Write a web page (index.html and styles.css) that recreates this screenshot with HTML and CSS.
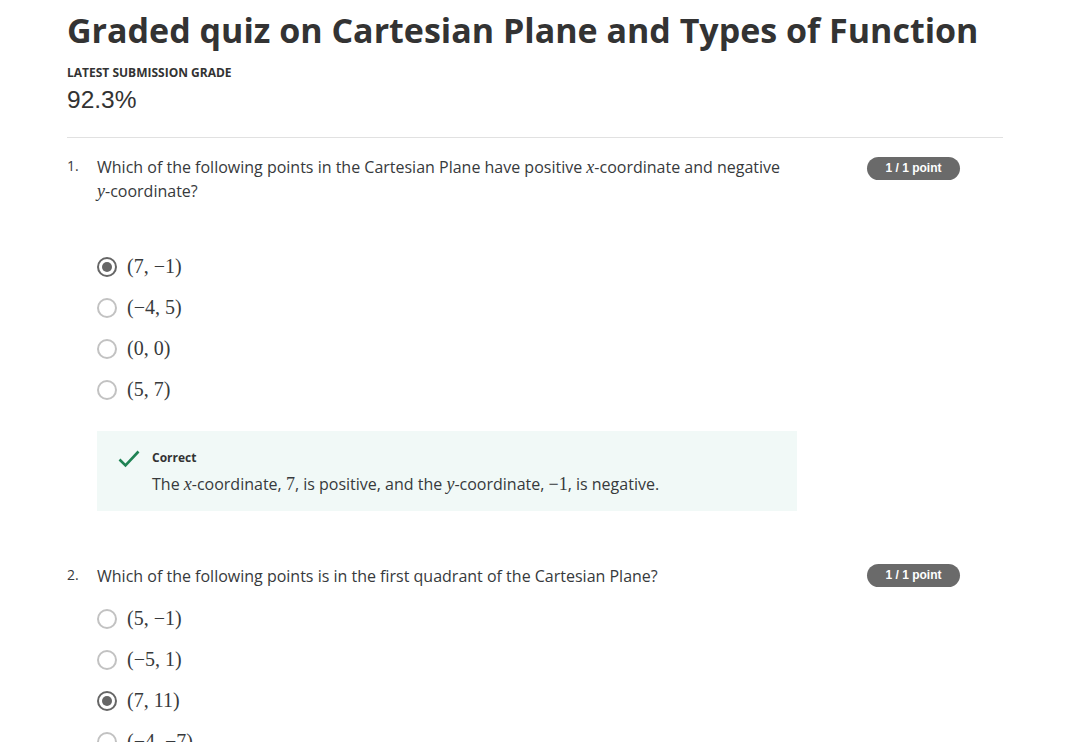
FILE: index.html
```html
<!DOCTYPE html>
<html>
<head>
<meta charset="utf-8">
<link rel="stylesheet" href="styles.css">
</head>
<body>
<main class="page">
  <header class="header">
    <h1 class="title">Graded quiz on Cartesian Plane and Types of Function</h1>
    <div class="grade-label">LATEST SUBMISSION GRADE</div>
    <div class="grade">92.3%</div>
  </header>

  <section class="question q1">
    <div class="q-head">
      <span class="q-num">1.</span>
      <p class="q-text">Which of the following points in the Cartesian Plane have positive <span class="mi">x</span>-coordinate and negative <span class="mi">y</span>-coordinate?</p>
      <span class="badge">1 / 1 point</span>
    </div>
    <ul class="options first-opts">
      <li class="opt"><span class="radio checked"></span><span class="math">(7, −1)</span></li>
      <li class="opt"><span class="radio"></span><span class="math">(−4, 5)</span></li>
      <li class="opt"><span class="radio"></span><span class="math">(0, 0)</span></li>
      <li class="opt"><span class="radio"></span><span class="math">(5, 7)</span></li>
    </ul>
    <div class="feedback">
      <svg class="check" width="22" height="18" viewBox="0 0 22 18"><path d="M1.5 9.5 L7.5 15.5 L20.5 1.5" fill="none" stroke="#1f8354" stroke-width="2.6"/></svg>
      <div class="fb-body">
        <div class="fb-title">Correct</div>
        <div class="fb-text">The <span class="mi">x</span>-coordinate, <span class="mn">7</span>, is positive, and the <span class="mi">y</span>-coordinate, <span class="mn">−1</span>, is negative.</div>
      </div>
    </div>
  </section>

  <section class="question q2">
    <div class="q-head">
      <span class="q-num">2.</span>
      <p class="q-text">Which of the following points is in the first quadrant of the Cartesian Plane?</p>
      <span class="badge">1 / 1 point</span>
    </div>
    <ul class="options">
      <li class="opt"><span class="radio"></span><span class="math">(5, −1)</span></li>
      <li class="opt"><span class="radio"></span><span class="math">(−5, 1)</span></li>
      <li class="opt"><span class="radio checked"></span><span class="math">(7, 11)</span></li>
      <li class="opt"><span class="radio"></span><span class="math">(−4, −7)</span></li>
    </ul>
  </section>
</main>
</body>
</html>
```

FILE: styles.css
```css
html, body {
  margin: 0;
  padding: 0;
  background: #fff;
  overflow: hidden;
}
body {
  font-family: "Open Sans", "Liberation Sans", sans-serif;
  color: #373a3c;
}
.page {
  width: 936px;
  margin-left: 67px;
}
.header {
  border-bottom: 1px solid #e1e1e1;
  padding-bottom: 22px;
}
.title {
  margin: 0;
  padding-top: 8px;
  font-size: 34px;
  line-height: 44px;
  font-weight: 700;
  color: #333;
  white-space: nowrap;
}
.grade-label {
  margin-top: 13px;
  font-size: 12px;
  line-height: 16px;
  font-weight: 700;
  color: #333;
}
.grade {
  margin-top: 4px;
  font-family: "Liberation Sans", Arial, sans-serif;
  font-size: 24.5px;
  line-height: 30px;
  color: #333;
}
.question {
  padding-top: 17px;
}
.q2 {
  padding-top: 53px;
}
.q-head {
  display: flex;
  align-items: flex-start;
}
.q-num {
  width: 30px;
  font-size: 14px;
  line-height: 22px;
  flex: none;
}
.q-text {
  margin: 0;
  width: 700px;
  font-size: 16px;
  line-height: 24px;
  color: #373a3c;
}
.badge {
  margin-left: 70px;
  margin-top: 2px;
  width: 93px;
  height: 23px;
  border-radius: 12px;
  background: #6a6a6a;
  color: #fff;
  font-family: "Liberation Sans", Arial, sans-serif;
  font-weight: 700;
  font-size: 12px;
  line-height: 23px;
  text-align: center;
  flex: none;
}
.q2 .badge {
  margin-top: 0;
}
.mi {
  font-family: "Liberation Serif", "DejaVu Serif", serif;
  font-style: italic;
  font-size: 18px;
}
.mn {
  font-family: "Liberation Serif", "DejaVu Serif", serif;
  font-size: 18px;
}
.options {
  list-style: none;
  margin: 0;
  padding: 0 0 0 30px;
}
.first-opts {
  margin-top: 43px;
}
.q2 .options {
  margin-top: 10px;
}
.opt {
  display: flex;
  align-items: center;
  height: 41px;
}
.radio {
  box-sizing: border-box;
  width: 20px;
  height: 20px;
  border-radius: 50%;
  border: 2px solid #c2c2c2;
  margin-right: 10px;
  flex: none;
  display: flex;
  align-items: center;
  justify-content: center;
}
.radio.checked {
  border: 2px solid #666;
}
.radio.checked::after {
  content: "";
  width: 10px;
  height: 10px;
  border-radius: 50%;
  background: #666;
}
.math {
  font-family: "Liberation Serif", "DejaVu Serif", serif;
  font-size: 20px;
  color: #373a3c;
}
.feedback {
  margin: 21px 0 0 30px;
  width: 700px;
  height: 80px;
  box-sizing: border-box;
  background: #f1f9f7;
  display: flex;
  align-items: flex-start;
  padding: 19px 0 0 21px;
}
.check {
  flex: none;
  margin-right: 12px;
}
.fb-title {
  font-size: 12px;
  line-height: 16px;
  font-weight: 700;
  color: #333;
}
.fb-text {
  margin-top: 6px;
  font-size: 16px;
  line-height: 24px;
  color: #373a3c;
}
```
